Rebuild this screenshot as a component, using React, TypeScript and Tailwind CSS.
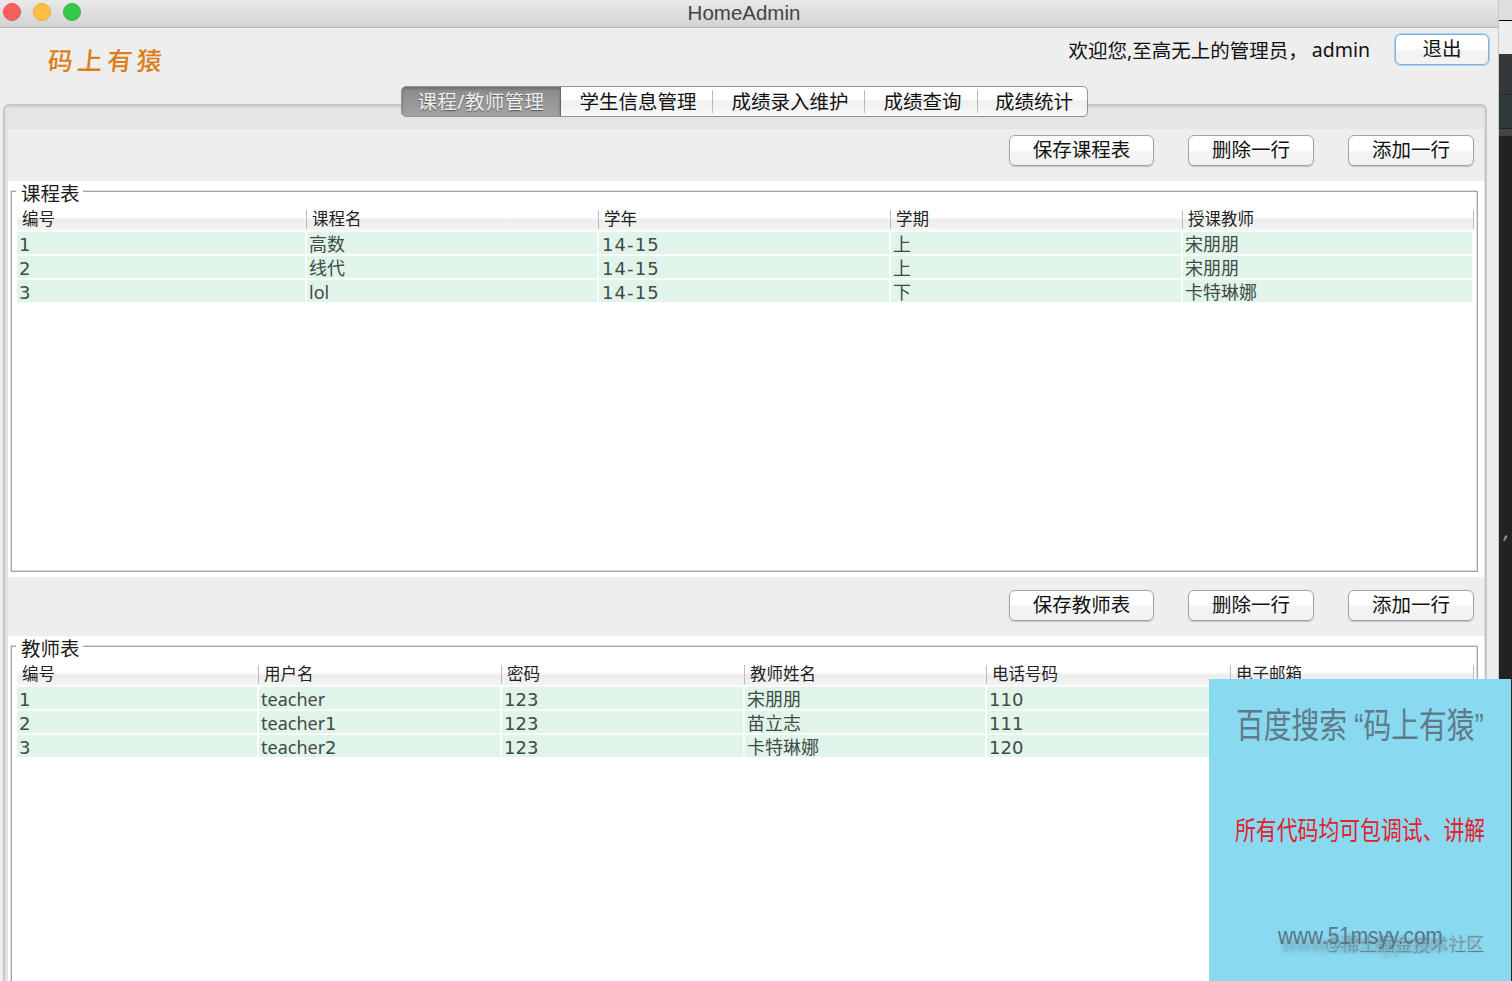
import { clsx } from 'clsx'

type Column = { title: string; term?: boolean }

type TableProps = {
  title: string
  columns: Column[]
  rows: string[][]
  gridClass: string
  className?: string
}

const courseColumns: Column[] = [
  { title: '编号' },
  { title: '课程名' },
  { title: '学年', term: true },
  { title: '学期' },
  { title: '授课教师' },
]

const courses = [
  ['1', '高数', '14-15', '上', '宋朋朋'],
  ['2', '线代', '14-15', '上', '宋朋朋'],
  ['3', 'lol', '14-15', '下', '卡特琳娜'],
]

const teacherColumns: Column[] = [
  { title: '编号' },
  { title: '用户名' },
  { title: '密码' },
  { title: '教师姓名' },
  { title: '电话号码' },
  { title: '电子邮箱' },
]

const teachers = [
  ['1', 'teacher', '123', '宋朋朋', '110', ''],
  ['2', 'teacher1', '123', '苗立志', '111', ''],
  ['3', 'teacher2', '123', '卡特琳娜', '120', ''],
]

const tabs = [
  { label: '课程/教师管理', width: 'w-[159px]' },
  { label: '学生信息管理', width: 'w-[152px]' },
  { label: '成绩录入维护', width: 'w-[152px]' },
  { label: '成绩查询', width: 'w-[113px]' },
  { label: '成绩统计', width: 'w-[109px]' },
]

function TitleBar() {
  return (
    <div className="grid h-[28px] shrink-0 grid-cols-[1fr_auto_1fr] border-b border-[#b4b4b4] bg-linear-to-b from-[#e9e9e9] to-[#d3d3d3]">
      <div className="flex gap-[12px] pt-[3px] pl-[3px]">
        <span className="size-[18px] rounded-full border border-[#e8524f] bg-[#f95f5c]" />
        <span className="size-[18px] rounded-full border border-[#e9ab38] bg-[#fdbe41]" />
        <span className="size-[18px] rounded-full border border-[#2db940] bg-[#34c84a]" />
      </div>
      <span className="pr-[10px] font-['Liberation_Sans',sans-serif] text-[20.5px] leading-[26px] text-[#444]">HomeAdmin</span>
    </div>
  )
}

function Button({ label, className }: { label: string; className: string }) {
  return (
    <button
      type="button"
      className={clsx(
        'h-[31px] rounded-[6px] border bg-linear-to-b from-white from-45% via-[#f4f4f4] via-55% to-[#f2f2f2] pb-[2px] text-center text-[19.5px] leading-[27px] text-[#111]',
        className,
      )}
    >
      {label}
    </button>
  )
}

function Toolbar({ save, className }: { save: string; className: string }) {
  const look = 'border-[#a3a3a3] shadow-[0_1px_1px_#c4c4c4]'
  return (
    <div className={clsx('flex shrink-0 justify-end gap-[34px] bg-[#eee] pr-[10px]', className)}>
      <Button label={save} className={clsx('w-[145px]', look)} />
      <Button label="删除一行" className={clsx('w-[126px]', look)} />
      <Button label="添加一行" className={clsx('w-[126px]', look)} />
    </div>
  )
}

/** Cell text, with the digits set in the wider face. */
function CellText({ value }: { value: string }) {
  return value.split(/([\d-]+)/).map((part, i) =>
    i % 2 ? (
      <span key={i} className="font-['DejaVu_Sans',sans-serif]">
        {part}
      </span>
    ) : (
      part
    ),
  )
}

function DataTable({ title, columns, rows, gridClass, className }: TableProps) {
  return (
    <div
      className={clsx(
        'ml-[3px] w-[1467px] shrink-0 border border-[#a6a6a6] pl-[5px] shadow-[-1px_-1px_0_#dcdcdc,inset_-1px_-1px_0_#dcdcdc]',
        className,
      )}
    >
      <div className="-mt-[10px] ml-[-1px] h-[26px] w-[67px] bg-white pl-[5px] text-[19.5px] leading-[24px] whitespace-nowrap text-[#1c1c1c]">
        {title}
      </div>
      <div className={clsx('grid h-[22px] w-[1457px] bg-linear-to-b from-white from-40% via-[#ececec] via-55% to-[#f4f4f4]', gridClass)}>
        {columns.map((c) => (
          <div key={c.title} className="mt-[2px] h-[19px] border-r border-[#bdbdbd] pl-[5px] text-[16.5px] leading-[18px] text-[#222]">
            {c.title}
          </div>
        ))}
      </div>
      {rows.map((row) => (
        <div key={row[0]} className={clsx('grid h-[24px] w-[1457px] border-t-2 border-[#f8fdfa]', gridClass)}>
          {row.map((value, i) => (
            <div
              key={columns[i].title}
              className={clsx(
                'h-[22px] border-r-2 border-[#f8fdfa] bg-[#e0f4ea] text-[18px] leading-[24px] text-[#414b45]',
                columns[i].term ? 'pl-[3px] tracking-[1.1px]' : 'pl-[2px]',
              )}
            >
              <CellText value={value} />
            </div>
          ))}
        </div>
      ))}
    </div>
  )
}

/** Sliver of the editor that shows behind the window. */
function Backdrop() {
  return (
    <div className="flex flex-1 flex-col overflow-hidden bg-[#222]">
      <div className="h-[20px] shrink-0 bg-[#dedede]" />
      <div className="h-[34px] shrink-0 border-t border-black bg-[#ededed]" />
      <div className="h-[41px] shrink-0 border-b border-[#242829] bg-[#34383a]" />
      <div className="h-[33px] shrink-0 bg-[#303a3b]" />
      <div className="h-[8px] shrink-0 border-t border-[#222] bg-[#454545]" />
      <span className="mt-[381px] pl-[5px] text-[22px] leading-[24px] text-[#999] italic">,</span>
    </div>
  )
}

function Promo() {
  return (
    <div className="absolute top-[679px] left-[1209px] z-20 h-[302px] w-[302px] overflow-hidden bg-[#89d9f0] whitespace-nowrap">
      <p className="mt-[23px] ml-[27px] w-fit origin-left scale-x-[0.793] text-[35px] leading-[46px] text-[#5f7a88]">
        百度搜索 <span className="font-['Liberation_Sans','Noto_Sans_CJK_SC',sans-serif]">“码上有猿”</span>
      </p>
      <p className="mt-[62px] ml-[26px] w-fit origin-left scale-x-[0.802] text-[26px] leading-[38px] text-[#e3202c]">
        所有代码均可包调试、讲解
      </p>
      <p className="mt-[71px] ml-[69px] w-fit origin-left scale-x-[0.866] font-['Liberation_Sans',sans-serif] text-[24px] leading-[32px] text-[#587686] [text-shadow:4px_8px_5px_#6d9fb0]">
        www.51msyy.com
      </p>
      <p className="-mt-[21px] ml-[115px] text-[17.9px] leading-[24px] text-[#92c6d5] [text-shadow:1px_1px_1px_#4e7180]">
        @稀土掘金技术社区
      </p>
    </div>
  )
}

export default function App() {
  return (
    <div
      lang="zh-CN"
      className="relative flex h-[981px] w-[1512px] overflow-hidden bg-[#222] font-['Noto_Sans','Noto_Sans_CJK_SC',sans-serif]"
    >
      <div className="flex w-[1499px] shrink-0 flex-col overflow-hidden border-r border-[#c9c9c9] bg-[#eee]">
        <TitleBar />
        <header className="flex h-[58px] shrink-0 items-start justify-between pr-[9px] pl-[48px]">
          <h1 className="mt-[16px] -skew-x-6 text-[25px] leading-[32px] font-medium tracking-[4.6px] text-[#db7d18]">
            码上有猿
          </h1>
          <div className="flex pt-[6px]">
            <span className="mr-[4px] text-[19.5px] leading-[33px] text-[#111]">欢迎您,至高无上的管理员，</span>
            <span className="mr-[25px] text-[19.5px] leading-[32px] text-[#111]">admin</span>
            <Button label="退出" className="w-[94px] border-[#7fb3dd] shadow-[0_0_0_1px_#a9d0ef]" />
          </div>
        </header>

        <nav className="z-10 ml-[401px] flex h-[31px] w-[687px] shrink-0 overflow-hidden rounded-[5px] border border-[#929292] bg-linear-to-b from-white from-40% via-[#f0f0f0] via-50% to-[#f8f8f8]">
          {tabs.map((tab, i) => (
            <button
              key={tab.label}
              type="button"
              className={clsx(
                'flex shrink-0 items-center justify-center text-[19.5px] leading-[28px] whitespace-nowrap',
                tab.width,
                i === 0
                  ? 'border-r border-[#666] bg-linear-to-b from-[#8b8b8b] to-[#a2a2a2] tracking-[0.4px] text-[#f0f0f0] [text-shadow:0_1px_1px_#555] shadow-[inset_0_2px_3px_#6d6d6d]'
                  : 'pl-[3px] text-[#111]',
              )}
            >
              <span className="flex-1">{tab.label}</span>
              {i > 0 && i < tabs.length - 1 && <span className="h-[23px] w-px bg-[#bbb]" />}
            </button>
          ))}
        </nav>

        <main className="-mt-[13px] ml-[3px] flex w-[1484px] flex-1 flex-col overflow-hidden rounded-t-[6px] border-2 border-b-0 border-[#c6c6c6] bg-[#e5e5e5] pr-px pl-[3px] shadow-[inset_0_1px_2px_#d0d0d0]">
          <Toolbar save="保存课程表" className="mt-[23px] h-[52px] pt-[6px]" />
          <section className="h-[396px] shrink-0 bg-white pt-[10px]">
            <DataTable
              title="课程表"
              columns={courseColumns}
              rows={courses}
              gridClass="grid-cols-[290px_292px_292px_292px_291px]"
              className="h-[381px]"
            />
          </section>
          <Toolbar save="保存教师表" className="h-[59px] pt-[13px]" />
          <section className="flex-1 overflow-hidden bg-white pt-[10px]">
            <DataTable
              title="教师表"
              columns={teacherColumns}
              rows={teachers}
              gridClass="grid-cols-[242px_243px_243px_242px_244px_243px]"
              className="h-[400px]"
            />
          </section>
        </main>
      </div>
      <Backdrop />
      <Promo />
    </div>
  )
}
